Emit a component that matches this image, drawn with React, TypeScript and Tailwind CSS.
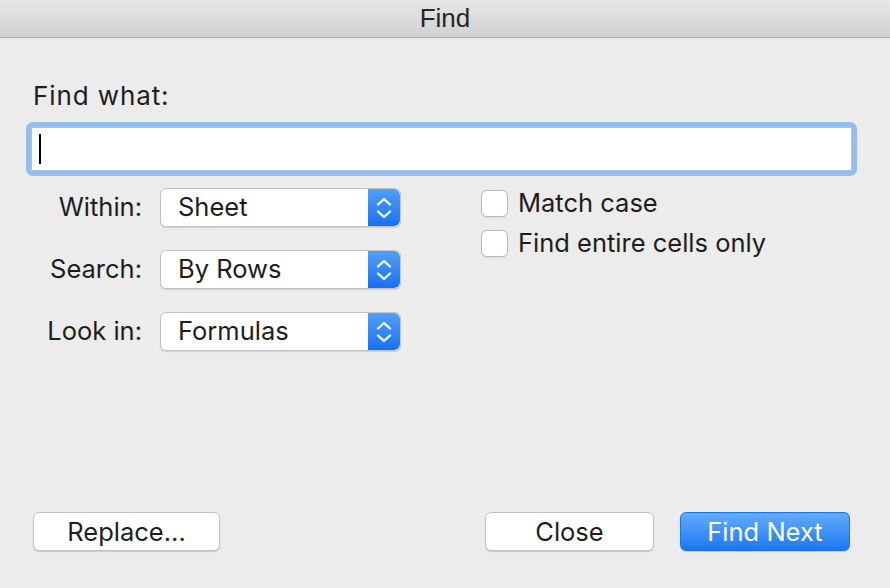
import React from 'react';

const FONT = "font-['Inter','Liberation_Sans',sans-serif]";

function Stepper() {
  return (
    <div className="flex h-full w-[32px] flex-none flex-col items-center justify-center gap-[4px] rounded-r-[6px] bg-gradient-to-b from-[#4fa0fb] to-[#1570f4]">
      <svg width="16" height="9" viewBox="0 0 16 9" fill="none">
        <path d="M2 7.5 L8 2 L14 7.5" stroke="white" strokeWidth="2.3" strokeLinecap="round" strokeLinejoin="round" />
      </svg>
      <svg width="16" height="9" viewBox="0 0 16 9" fill="none">
        <path d="M2 1.5 L8 7 L14 1.5" stroke="white" strokeWidth="2.3" strokeLinecap="round" strokeLinejoin="round" />
      </svg>
    </div>
  );
}

function SelectRow({ label, value }: { label: string; value: string }) {
  return (
    <div className="flex items-center">
      <span className="w-[116px] text-right text-[25.5px] text-[#1d1d1d]">{label}</span>
      <div className="ml-[18px] flex h-[39px] w-[241px] items-stretch overflow-hidden rounded-[6px] border border-[#c4c4c4] bg-white shadow-[0_1px_1px_rgba(0,0,0,0.12)]">
        <span className="flex flex-1 items-center pl-[17px] text-[25.5px] text-[#1d1d1d]">{value}</span>
        <Stepper />
      </div>
    </div>
  );
}

function Checkbox({ label }: { label: string }) {
  return (
    <div className="flex h-[27px] items-center">
      <span className="h-[27px] w-[27px] flex-none rounded-[6px] border border-[#b8b8b8] bg-white shadow-[0_1px_1px_rgba(0,0,0,0.08)]" />
      <span className="ml-[10px] text-[25.5px] text-[#1d1d1d]">{label}</span>
    </div>
  );
}

export default function App() {
  return (
    <div className={`${FONT} flex h-[588px] w-[890px] flex-col bg-[#ececec]`}>
      {/* title bar */}
      <div className="flex h-[38px] flex-none items-center justify-center border-b border-[#a9a9a9] bg-gradient-to-b from-[#e8e7e8] to-[#d2d1d2]">
        <span className="font-['Liberation_Sans',sans-serif] text-[26px] text-[#262626]">Find</span>
      </div>

      <div className="flex flex-1 flex-col pl-[26px] pr-[33px] pb-[37px]">
        <div className="mt-[45px] pl-[7px] text-[26px] leading-[26px] tracking-[0.9px] text-[#1d1d1d]">Find what:</div>

        <div className="mt-[13px] rounded-[7px] bg-[#93bcef] p-[5px]">
          <div className="flex h-[44px] items-center border border-[#a8c3e6] bg-white pl-[7px]">
            <span className="h-[30px] w-[2px] bg-black" />
          </div>
        </div>

        <div className="mt-[12px] flex">
          <div className="flex flex-col gap-[23px]">
            <SelectRow label="Within:" value="Sheet" />
            <SelectRow label="Search:" value="By Rows" />
            <SelectRow label="Look in:" value="Formulas" />
          </div>
          <div className="ml-[80px] mt-[2px] flex flex-col gap-[13px]">
            <Checkbox label="Match case" />
            <Checkbox label="Find entire cells only" />
          </div>
        </div>

        <div className="flex-1" />

        <div className="flex items-center pl-[7px]">
          <button className="h-[39px] w-[187px] rounded-[6px] border border-[#c2c2c2] bg-white text-[25.5px] text-[#1d1d1d] shadow-[0_1px_1px_rgba(0,0,0,0.15)]">
            Replace...
          </button>
          <div className="flex-1" />
          <button className="h-[39px] w-[169px] rounded-[6px] border border-[#c2c2c2] bg-white text-[25.5px] text-[#1d1d1d] shadow-[0_1px_1px_rgba(0,0,0,0.15)]">
            Close
          </button>
          <button className="ml-[26px] mr-[7px] h-[39px] w-[170px] rounded-[6px] border border-[#1a74ee] bg-gradient-to-b from-[#63acfa] to-[#1876f3] text-[25.5px] text-white shadow-[0_1px_1px_rgba(0,0,0,0.15)]">
            Find Next
          </button>
        </div>
      </div>
    </div>
  );
}
